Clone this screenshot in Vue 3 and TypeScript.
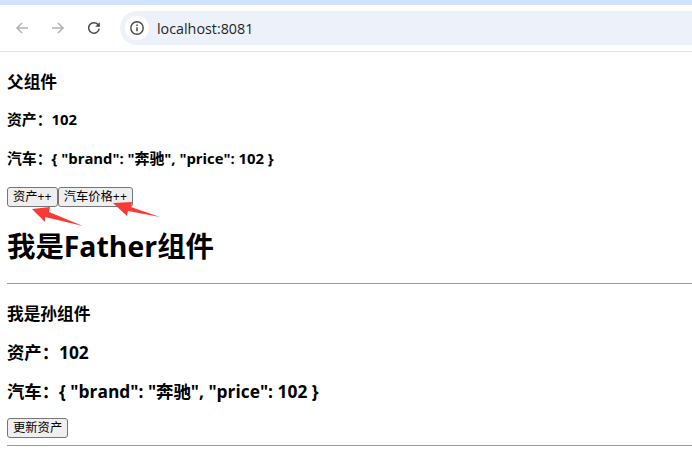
<template>
  <div class="browser">
    <div class="tab-strip"></div>
    <header class="toolbar">
      <svg class="nav-icon" viewBox="0 0 16 16" width="16" height="16">
        <path d="M14 8H3M8 3 3 8l5 5" fill="none" stroke="#b0b2b5" stroke-width="1.5" />
      </svg>
      <svg class="nav-icon" viewBox="0 0 16 16" width="16" height="16">
        <path d="M2 8h11M8 3l5 5-5 5" fill="none" stroke="#b0b2b5" stroke-width="1.5" />
      </svg>
      <svg class="nav-icon" viewBox="0 0 16 16" width="16" height="16">
        <path d="M13.2 8.6A5.3 5.3 0 1 1 11.8 4.3L13.4 6" fill="none" stroke="#474747" stroke-width="1.5" />
        <path d="M13.8 2.2v4.6H9.2z" fill="#474747" />
      </svg>
      <div class="address">
        <span class="info-badge">
          <svg viewBox="0 0 16 16" width="16" height="16">
            <circle cx="8" cy="8" r="6.2" fill="none" stroke="#474747" stroke-width="1.4" />
            <path d="M8 7.2v4M8 4.6v1.4" fill="none" stroke="#474747" stroke-width="1.5" />
          </svg>
        </span>
        <span class="url">localhost:8081</span>
      </div>
    </header>

    <main class="page">
      <h3 class="parent-title">父组件</h3>
      <p class="stat first">资产：{{ assets }}</p>
      <p class="stat">汽车：{{ carText }}</p>
      <div class="actions">
        <button type="button">资产++</button><button type="button">汽车价格++</button>
      </div>
      <h1>我是Father组件</h1>
      <hr class="rule-top" />
      <h3 class="child-title">我是孙组件</h3>
      <h3 class="child-stat first">资产：{{ assets }}</h3>
      <h3 class="child-stat">汽车：{{ carText }}</h3>
      <button type="button" class="update">更新资产</button>
      <hr class="rule-bottom" />
    </main>

    <svg class="arrows" viewBox="0 0 692 452" width="692" height="452">
      <path d="M32 209 50 207 49 212 83 226 45 217 45 222z" fill="#f93a36" />
      <path d="M113 203 132 202 131 207 160 217 128 211 127 216z" fill="#f93a36" />
    </svg>
  </div>
</template>

<script setup lang="ts">
const assets = 102
const carText = '{ "brand": "奔驰", "price": 102 }'
</script>

<style>
html,
body {
  margin: 0;
  background: #fff;
}
</style>

<style scoped>
.browser {
  position: relative;
  width: 692px;
  height: 452px;
  overflow: hidden;
  background: #fff;
  color: #000;
  font-family: "Open Sans", "Noto Sans CJK SC", sans-serif;
}

.tab-strip {
  height: 5px;
  background: #d3e3fd;
}

.toolbar {
  display: flex;
  align-items: center;
  height: 46px;
  padding-left: 14px;
  gap: 20px;
  border-bottom: 1px solid #e0e0e0;
  border-top-left-radius: 8px;
  background: #fff;
}

.nav-icon {
  flex: none;
}

.address {
  display: flex;
  align-items: center;
  flex: 1;
  height: 34px;
  margin-left: -2px;
  padding-left: 5px;
  border-radius: 17px 0 0 17px;
  background: #edf2fa;
}

.info-badge {
  display: flex;
  align-items: center;
  justify-content: center;
  width: 24px;
  height: 24px;
  border-radius: 50%;
  background: #fff;
}

.url {
  margin-left: 8px;
  font-size: 14.3px;
  color: #1f1f1f;
}

.page {
  padding: 0 0 0 7px;
}

h3,
h1,
p {
  margin: 0;
  font-weight: 700;
}

.parent-title {
  margin-top: 19px;
  font-size: 16.7px;
  line-height: 22px;
}

.stat {
  margin-top: 19px;
  font-size: 14.85px;
  line-height: 20px;
}

.stat.first {
  margin-top: 16px;
}

.actions {
  display: flex;
  margin-top: 19px;
}

button {
  height: 20px;
  padding: 0 5px;
  border: 1px solid #767676;
  border-radius: 3px;
  background: #efefef;
  color: #000;
  font-family: inherit;
  font-size: 12.3px;
  line-height: 18px;
}

h1 {
  margin-top: 20px;
  font-size: 28.4px;
  line-height: 38px;
}

hr {
  height: 1px;
  margin: 0;
  border: 0;
  background: #9a9a9a;
}

.rule-top {
  margin-top: 18px;
}

.child-title {
  margin-top: 19px;
  font-size: 16.7px;
  line-height: 22px;
}

.child-stat {
  margin-top: 15px;
  font-size: 17.35px;
  line-height: 24px;
}

.child-stat.first {
  margin-top: 15px;
}

.update {
  display: block;
  margin-top: 15px;
}

.rule-bottom {
  margin-top: 7px;
}

.arrows {
  position: absolute;
  inset: 0;
  pointer-events: none;
}
</style>
